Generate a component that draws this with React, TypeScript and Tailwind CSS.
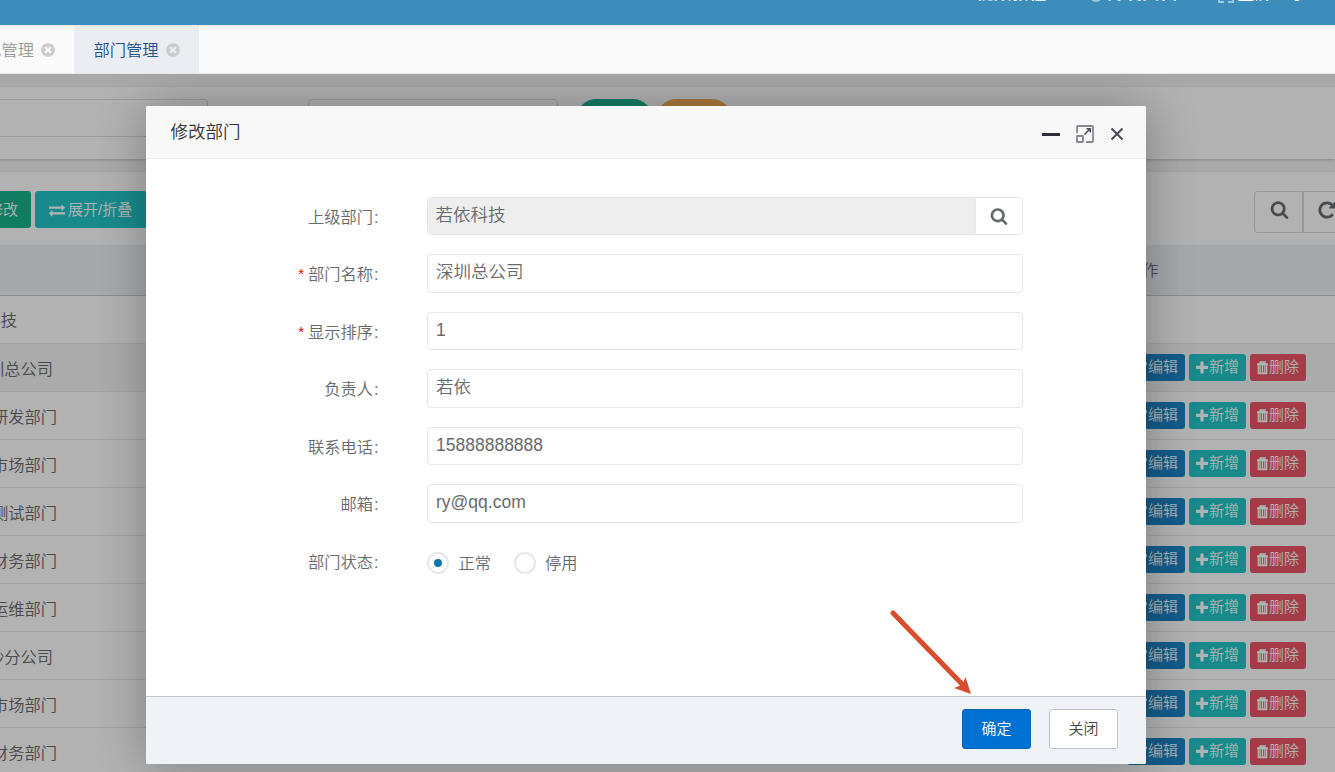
import React from "react";

const paths = {
  plus: "M1600 736v192q0 40-28 68t-68 28h-416v416q0 40-28 68t-68 28h-192q-40 0-68-28t-28-68v-416h-416q-40 0-68-28t-28-68v-192q0-40 28-68t68-28h416v-416q0-40 28-68t68-28h192q40 0 68 28t28 68v416h416q40 0 68 28t28 68z",
  search: "M1216 832q0-185-131.5-316.5t-316.5-131.5-316.5 131.5-131.5 316.5 131.5 316.5 316.5 131.5 316.5-131.5 131.5-316.5zm512 832q0 52-38 90t-90 38q-54 0-90-38l-343-342q-179 124-399 124-143 0-273.5-55.5t-225-150-150-225-55.5-273.5 55.5-273.5 150-225 225-150 273.5-55.5 273.5 55.5 225 150 150 225 55.5 273.5q0 220-124 399l343 343q37 37 37 90z",
  close: "M1277 1122q0-26-19-45l-181-181 181-181q19-19 19-45 0-27-19-46l-90-90q-19-19-46-19-26 0-45 19l-181 181-181-181q-19-19-45-19-27 0-46 19l-90 90q-19 19-19 46 0 26 19 45l181 181-181 181q-19 19-19 45 0 27 19 46l90 90q19 19 46 19 26 0 45-19l181-181 181 181q19 19 45 19 27 0 46-19l90-90q19-19 19-46zm387-226q0 209-103 385.5t-279.5 279.5-385.5 103-385.5-103-279.5-279.5-103-385.5 103-385.5 279.5-279.5 385.5-103 385.5 103 279.5 279.5 103 385.5z",
  exchange: "M1792 1184v192q0 13-9.5 22.5t-22.5 9.5h-1376v192q0 13-9.5 22.5t-22.5 9.5q-12 0-24-10l-319-320q-9-9-9-22 0-14 9-23l320-320q9-9 23-9 13 0 22.5 9.5t9.5 22.5v192h1376q13 0 22.5 9.5t9.5 22.5zm0-544q0 14-9 23l-320 320q-9 9-23 9-13 0-22.5-9.5t-9.5-22.5v-192h-1376q-13 0-22.5-9.5t-9.5-22.5v-192q0-13 9.5-22.5t22.5-9.5h1376v-192q0-14 9-23t23-9q12 0 24 10l319 319q9 9 9 23z",
  repeat: "M1664 256v448q0 26-19 45t-45 19h-448q-42 0-59-40-17-39 14-69l138-138q-148-137-349-137-104 0-198.5 40.5t-163.5 109.5-109.5 163.5-40.5 198.5 40.5 198.5 109.5 163.5 163.5 109.5 198.5 40.5q119 0 225-52t179-147q7-10 23-12 15 0 25 9l137 138q9 8 9.5 20.5t-7.5 22.5q-109 132-264 204.5t-327 72.5q-156 0-298-61t-245-164-164-245-61-298 61-298 164-245 245-164 298-61q147 0 284.5 55.5t244.5 156.5l130-129q29-31 70-14 39 17 39 59z",
};

function Icon({ name, className }: { name: keyof typeof paths; className: string }) {
  return (
    <svg viewBox="0 0 1792 1792" fill="currentColor" className={`shrink-0 ${className}`}>
      <path d={paths[name]} />
    </svg>
  );
}

const rows = ["若依科技", "深圳总公司", "研发部门", "市场部门", "测试部门", "财务部门", "运维部门", "长沙分公司", "市场部门", "财务部门"];

function Row({ name, index }: { name: string; index: number }) {
  const company = name.endsWith("公司");
  return (
    <div className={`flex h-12 shrink-0 items-center justify-between border-b border-[#e7eaec] ${index === 1 ? "bg-[#f5f5f5]" : "bg-white"}`}>
      <div className={`flex shrink-0 justify-end text-[16.25px] text-[#676a6c] ${index === 0 ? "w-[17px] pt-px" : company ? "w-[53px] pt-1" : "w-[57px] pt-1"}`}>
        <span className="whitespace-nowrap">{name}</span>
      </div>
      {index > 0 && (
        <div className="mr-[29px] flex gap-1 text-[15px] text-white">
          <span className="flex h-[27px] w-[58px] items-center justify-end rounded-[3px] bg-[#1c84c6] pr-[7px]">
            <svg viewBox="0 0 14 14" className="h-[14px] w-[14px] shrink-0" fill="none" stroke="currentColor" strokeWidth="1.6">
              <path d="M10.5 8V11.5Q10.5 13 9 13H2.5Q1 13 1 11.5V5Q1 3.5 2.5 3.5H7M5 9.2L12.5 1.7" />
              <path d="M6 8L12.2 1.8" strokeWidth="3.2" />
            </svg>
            编辑
          </span>
          <span className="flex h-[27px] w-[57px] items-center rounded-[3px] bg-[#23c6c8] pl-[6px]">
            <Icon name="plus" className="h-[16px] w-[14px] scale-110" />新增
          </span>
          <span className="flex h-[27px] w-14 items-center rounded-[3px] bg-[#ed5565] pl-[6px]">
            <svg viewBox="0 0 13 14" className="h-[14px] w-[13px] shrink-0" fill="none" stroke="currentColor">
              <path d="M1 3.2H12M4.3 3V1.2H8.7V3M2.6 3.5V12.2H10.4V3.5" strokeWidth="1.9" />
              <path d="M4.7 4V11.5M6.5 4V11.5M8.3 4V11.5" strokeWidth="1" />
            </svg>
            删除
          </span>
        </div>
      )}
    </div>
  );
}

function Field({ label, required, children }: { label: string; required?: boolean; children: React.ReactNode }) {
  return (
    <div className="flex h-[57.5px] items-start">
      <div className="flex w-[234px] shrink-0 justify-end pt-2 text-[16.25px] leading-6">
        {required && <span className="mr-1 text-[15px] text-[#ff0000]">*</span>}
        <span className="whitespace-nowrap">{label}</span>
        <span className="w-[7px] pl-px">:</span>
      </div>
      <div className="ml-[47px] w-[596px]">{children}</div>
    </div>
  );
}

function TextBox({ value }: { value: string }) {
  return <div className="h-[38.5px] rounded-[4px] border border-[#e5e6e7] bg-white px-2 text-[17.5px] leading-[35.4px]">{value}</div>;
}

export default function App() {
  return (
    <div className="relative flex h-[772px] w-[1335px] flex-col overflow-hidden bg-white font-['Liberation_Sans','Noto_Sans_CJK_SC',sans-serif] font-[350] text-[#676a6c]">
      <header className="flex h-[25px] shrink-0 items-start justify-end overflow-hidden bg-[#3c8dbc] pr-[28px] text-[17.5px] leading-[26px] font-bold text-white">
        <div className="-mt-5 flex">
          <span className="w-[70px]">视频教程</span>
          <span className="ml-[43px] flex w-[88px] items-center justify-between">
            <svg viewBox="0 0 14 14" className="mt-[6px] h-[14px] w-[14px] opacity-50"><circle cx="7" cy="7" r="6" fill="currentColor" /></svg>
            开发文档
          </span>
          <span className="ml-[41px] flex w-[89px] items-center justify-between">
            <svg viewBox="0 0 16 16" className="mt-[3px] h-4 w-4 opacity-50" fill="none" stroke="currentColor" strokeWidth="2"><path d="M1 6V1H6M10 1H15V6M15 10V15H10M6 15H1V10" /></svg>
            全屏显示
          </span>
        </div>
      </header>
      <nav className="flex h-[49px] shrink-0 border-t border-b border-[#e7e7e7] bg-[#fafafa] text-[16.25px]">
        <div className="flex w-[74px] items-center justify-end pr-[18px] text-[#999]">
          <span className="pt-[2px] whitespace-nowrap">角色管理</span>
          <Icon name="close" className="ml-[6px] h-4 w-4 text-[#ccc]" />
        </div>
        <div className="flex w-[125px] items-center bg-[#eaedf1] pl-[19.5px] text-[#23508e]">
          <span className="pt-[2px]">部门管理</span>
          <Icon name="close" className="ml-[6px] h-4 w-4 text-[#ccc]" />
        </div>
      </nav>
      <div className="relative min-h-0 flex-1 overflow-hidden bg-[#f3f3f4]">
        <div className="flex flex-col pt-[13px]">
          <section className="flex h-[72px] shrink-0 bg-white pt-3 shadow-[0_1px_3px_rgba(0,0,0,.2)]">
            <div className="h-[38px] w-[208px] rounded-r-[4px] border border-l-0 border-[#ddd]" />
            <div className="ml-[100px] h-[38px] w-[250px] rounded-[4px] border border-[#ddd]" />
            <div className="ml-[19px] h-[38px] w-[75px] rounded-full bg-[#1ab394]" />
            <div className="ml-[5px] h-[38px] w-[74px] rounded-full bg-[#f8ac59]" />
          </section>
          <section className="mt-[13px] flex shrink-0 flex-col bg-white shadow-[0_1px_3px_rgba(0,0,0,.2)]">
            <div className="flex h-[73px] items-start justify-between pt-[19px]">
              <div className="flex gap-1 text-[15px] text-white">
                <span className="flex h-[37px] w-[31px] items-center justify-end rounded-r-[3px] bg-[#18b48f] pt-px pr-[13px] whitespace-nowrap">修改</span>
                <span className="flex h-[37px] w-[112px] items-center rounded-[3px] bg-[#23c6c8] pt-px pl-[14px]">
                  <Icon name="exchange" className="mr-[3px] h-4 w-4" />展开/折叠
                </span>
              </div>
              <div className="flex w-[81px] shrink-0 text-[#676a6c]">
                <span className="flex h-[42px] w-[49px] shrink-0 justify-center rounded-l-[3px] border border-[#d8d8d8] pt-[8px] pl-[2px]"><Icon name="search" className="h-[19px] w-[19px]" /></span>
                <span className="flex h-[42px] w-[49px] shrink-0 border border-[#d8d8d8] pt-[8px] pl-[13px]"><Icon name="repeat" className="h-[20px] w-[20px]" /></span>
              </div>
            </div>
            <div className="flex h-[51px] items-center border-b border-[#c8cbce] bg-[#ecf2f6] pl-[1126px] text-[16.25px]">操作</div>
            {rows.map((name, i) => <Row key={i} name={name} index={i} />)}
          </section>
        </div>
        <div className="absolute inset-0 bg-black/30" />
        <div className="absolute top-8 left-[146px] h-[658px] w-[1000px] rounded-[2px] shadow-[1px_1px_50px_rgba(0,0,0,.3)]" />
      </div>
      <div className="absolute top-[106px] left-[146px] flex h-[658px] w-[1000px] flex-col overflow-hidden rounded-[2px] bg-white">
        <div className="flex h-[53px] shrink-0 items-center justify-between border-b border-[#eee] bg-[#f8f8f8] pr-[22px] pl-[24.5px]">
          <span className="text-[17.5px] text-[#333]">修改部门</span>
          <div className="flex items-center gap-4 pt-1">
            <span className="h-[3px] w-[18px] bg-[#2e2d3c]" />
            <svg viewBox="0 0 18 18" className="h-[18px] w-[18px]" fill="none">
              <path d="M1 8V2Q1 1 2 1H16Q17 1 17 2V16Q17 17 16 17H10" stroke="#85858e" strokeWidth="1.8" />
              <rect x="1" y="11" width="6" height="6" rx="0.5" stroke="#85858e" strokeWidth="1.8" />
              <path d="M8.5 9.5L14 4M10.5 3.7H14.3V7.5" stroke="#4c4b58" strokeWidth="1.5" />
            </svg>
            <svg viewBox="0 0 14 14" className="h-[14px] w-[14px]" fill="none"><path d="M1.5 1.5L12.5 12.5M12.5 1.5L1.5 12.5" stroke="#4b4a57" strokeWidth="2" /></svg>
          </div>
        </div>
        <div className="flex flex-1 flex-col pt-[37.9px]">
          <Field label="上级部门">
            <div className="flex h-[38px] overflow-hidden rounded-[4px] border border-[#e5e6e7]">
              <div className="flex-1 bg-[#eee] px-[7.5px] text-[17.5px] leading-[35px]">若依科技</div>
              <div className="flex w-[47px] items-center justify-center border-l border-[#e5e6e7]"><Icon name="search" className="h-[18px] w-[18px]" /></div>
            </div>
          </Field>
          <Field label="部门名称" required><TextBox value="深圳总公司" /></Field>
          <Field label="显示排序" required><TextBox value="1" /></Field>
          <Field label="负责人"><TextBox value="若依" /></Field>
          <Field label="联系电话"><TextBox value="15888888888" /></Field>
          <Field label="邮箱"><TextBox value="ry@qq.com" /></Field>
          <Field label="部门状态">
            <div className="flex items-center pt-[10px] text-[16.25px] leading-[22px]">
              <span className="flex h-[22px] w-[22px] items-center justify-center rounded-full border-2 border-[#e7e8e9]"><span className="h-2 w-2 rounded-full bg-[#0f76ae]" /></span>
              <span className="ml-[9.5px]">正常</span>
              <span className="ml-[22.5px] h-[22px] w-[22px] rounded-full border-2 border-[#e7e8e9]" />
              <span className="ml-[9.5px]">停用</span>
            </div>
          </Field>
        </div>
        <div className="flex h-[68px] shrink-0 justify-end gap-[18px] border-t border-[#c4c7cb] bg-[#eff3f7] pt-3 pr-7 text-[15px]">
          <span className="flex h-10 w-[69px] items-center justify-center rounded-[3px] border border-[#0763b8] bg-[#0070d2] text-white">确定</span>
          <span className="flex h-10 w-[69px] items-center justify-center rounded-[3px] border border-[#c0c4cc] bg-white text-[#444]">关闭</span>
        </div>
      </div>
      <svg viewBox="0 0 90 90" className="absolute top-[606px] left-[886px] h-[90px] w-[90px]">
        <path d="M7 7L75 77" stroke="#d94d2e" strokeWidth="5" strokeLinecap="round" />
        <path d="M85 88L79.5 71L77.5 76L73 80L68 82Z" fill="#d94d2e" />
      </svg>
    </div>
  );
}
